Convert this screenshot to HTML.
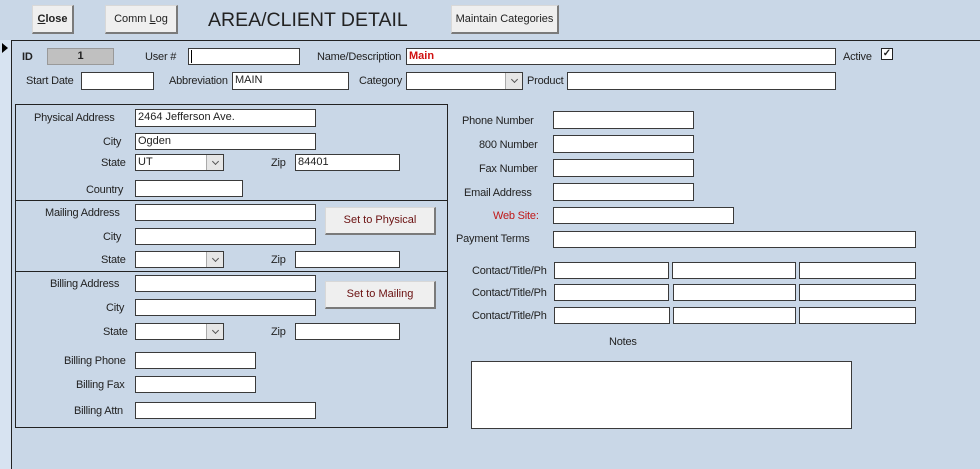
<!DOCTYPE html>
<html><head><meta charset="utf-8"><style>
*{margin:0;padding:0;box-sizing:border-box}
body{width:980px;height:469px;background:#c9d7e7;position:relative;overflow:hidden;font-family:"Liberation Sans",sans-serif;font-size:11px;color:#222}
div{position:absolute}
.l{white-space:nowrap;line-height:14px;letter-spacing:-0.2px;margin-top:1px}
.i{background:#fff;border:1px solid #3a3a3a;font-size:11px;line-height:15px;padding-left:2px;white-space:nowrap}
.b{background:#efefef;border:1px solid #d8d8d8;border-right:2px solid #7a7a7a;border-bottom:2px solid #7a7a7a;text-align:center;font-size:11px}
.s:after{content:"";position:absolute;right:0;top:0;width:16px;height:100%;background:#e6e6e6;border-left:1px solid #aaa}
.s:before{content:"";position:absolute;right:5px;top:4px;width:4px;height:4px;border-right:1px solid #555;border-bottom:1px solid #555;transform:rotate(45deg);z-index:2}
.h{background:#222}
</style></head><body>
<div style="left:0;top:40px;width:11px;height:429px;background:#d7e3f1"></div>
<div class="h" style="left:11px;top:40px;width:969px;height:1px"></div>
<div class="h" style="left:11px;top:40px;width:1px;height:429px"></div>
<div style="left:2px;top:43px;width:0;height:0;border-left:6px solid #000;border-top:5px solid transparent;border-bottom:5px solid transparent"></div>

<div class="b" style="left:32px;top:5px;width:42px;height:29px;line-height:26px;font-weight:bold"><u>C</u>lose</div>
<div class="b" style="left:105px;top:5px;width:73px;height:29px;line-height:26px">Comm <u>L</u>og</div>
<div class="l" style="left:208px;top:8px;font-size:19.5px;line-height:22px;letter-spacing:0">AREA/CLIENT DETAIL</div>
<div class="b" style="left:451px;top:5px;width:108px;height:29px;line-height:26px">Maintain Categories</div>

<div class="l" style="left:22px;top:49px;font-weight:bold">ID</div>
<div style="left:47px;top:48px;width:67px;height:17px;background:#c0c0c0;border:1px solid #999;text-align:center;font-weight:bold;line-height:15px">1</div>
<div class="l" style="left:145px;top:49px">User #</div>
<div class="i" style="left:188px;top:48px;width:112px;height:17px"><span style="display:inline-block;width:1px;height:13px;background:#000;margin-top:1px"></span></div>
<div class="l" style="left:317px;top:49px">Name/Description</div>
<div class="i" style="left:406px;top:48px;width:430px;height:17px;color:#d01010;font-weight:bold">Main</div>
<div class="l" style="left:843px;top:49px">Active</div>
<div style="left:881px;top:48px;width:12px;height:12px;background:#fff;border:1px solid #222;font-size:10px;line-height:10px;text-align:center;font-weight:bold">✓</div>

<div class="l" style="left:26px;top:73px">Start Date</div>
<div class="i" style="left:81px;top:72px;width:73px;height:18px"></div>
<div class="l" style="left:169px;top:73px">Abbreviation</div>
<div class="i" style="left:232px;top:72px;width:117px;height:18px">MAIN</div>
<div class="l" style="left:359px;top:73px">Category</div>
<div class="i s" style="left:406px;top:72px;width:117px;height:18px"></div>
<div class="l" style="left:527px;top:73px">Product</div>
<div class="i" style="left:567px;top:72px;width:269px;height:18px"></div>

<div style="left:15px;top:104px;width:433px;height:324px;border:1px solid #222"></div>
<div class="h" style="left:15px;top:200px;width:433px;height:1px"></div>
<div class="h" style="left:15px;top:271px;width:433px;height:1px"></div>

<div class="l" style="left:34px;top:110px">Physical Address</div>
<div class="i" style="left:135px;top:109px;width:181px;height:18px">2464 Jefferson Ave.</div>
<div class="l" style="left:103px;top:134px">City</div>
<div class="i" style="left:135px;top:133px;width:181px;height:17px">Ogden</div>
<div class="l" style="left:101px;top:155px">State</div>
<div class="i s" style="left:135px;top:154px;width:89px;height:17px">UT</div>
<div class="l" style="left:271px;top:155px">Zip</div>
<div class="i" style="left:295px;top:154px;width:105px;height:17px">84401</div>
<div class="l" style="left:86px;top:182px">Country</div>
<div class="i" style="left:135px;top:180px;width:108px;height:17px"></div>

<div class="l" style="left:45px;top:205px">Mailing Address</div>
<div class="i" style="left:135px;top:204px;width:181px;height:17px"></div>
<div class="b" style="left:325px;top:207px;width:111px;height:28px;line-height:25px;color:#6a1010">Set to Physical</div>
<div class="l" style="left:103px;top:229px">City</div>
<div class="i" style="left:135px;top:228px;width:181px;height:17px"></div>
<div class="l" style="left:101px;top:252px">State</div>
<div class="i s" style="left:135px;top:251px;width:89px;height:17px"></div>
<div class="l" style="left:271px;top:252px">Zip</div>
<div class="i" style="left:295px;top:251px;width:105px;height:17px"></div>

<div class="l" style="left:50px;top:276px">Billing Address</div>
<div class="i" style="left:135px;top:275px;width:181px;height:17px"></div>
<div class="b" style="left:325px;top:281px;width:111px;height:28px;line-height:25px;color:#6a1010">Set to Mailing</div>
<div class="l" style="left:106px;top:300px">City</div>
<div class="i" style="left:135px;top:299px;width:181px;height:17px"></div>
<div class="l" style="left:103px;top:324px">State</div>
<div class="i s" style="left:135px;top:323px;width:89px;height:17px"></div>
<div class="l" style="left:271px;top:324px">Zip</div>
<div class="i" style="left:295px;top:323px;width:105px;height:17px"></div>
<div class="l" style="left:64px;top:353px">Billing Phone</div>
<div class="i" style="left:135px;top:352px;width:121px;height:17px"></div>
<div class="l" style="left:76px;top:377px">Billing Fax</div>
<div class="i" style="left:135px;top:376px;width:121px;height:17px"></div>
<div class="l" style="left:74px;top:403px">Billing Attn</div>
<div class="i" style="left:135px;top:402px;width:181px;height:17px"></div>

<div class="l" style="left:462px;top:113px">Phone Number</div>
<div class="i" style="left:553px;top:111px;width:141px;height:18px"></div>
<div class="l" style="left:479px;top:137px">800 Number</div>
<div class="i" style="left:553px;top:135px;width:141px;height:18px"></div>
<div class="l" style="left:479px;top:161px">Fax Number</div>
<div class="i" style="left:553px;top:159px;width:141px;height:18px"></div>
<div class="l" style="left:464px;top:185px">Email Address</div>
<div class="i" style="left:553px;top:183px;width:141px;height:18px"></div>
<div class="l" style="left:493px;top:208px;color:#c01818">Web Site:</div>
<div class="i" style="left:553px;top:207px;width:181px;height:17px"></div>
<div class="l" style="left:456px;top:231px">Payment Terms</div>
<div class="i" style="left:553px;top:231px;width:363px;height:17px"></div>

<div class="l" style="left:472px;top:263px">Contact/Title/Ph</div>
<div class="i" style="left:554px;top:262px;width:115px;height:17px"></div>
<div class="i" style="left:672px;top:262px;width:124px;height:17px"></div>
<div class="i" style="left:799px;top:262px;width:117px;height:17px"></div>
<div class="l" style="left:472px;top:285px">Contact/Title/Ph</div>
<div class="i" style="left:554px;top:284px;width:115px;height:17px"></div>
<div class="i" style="left:673px;top:284px;width:123px;height:17px"></div>
<div class="i" style="left:799px;top:284px;width:117px;height:17px"></div>
<div class="l" style="left:472px;top:308px">Contact/Title/Ph</div>
<div class="i" style="left:554px;top:307px;width:116px;height:17px"></div>
<div class="i" style="left:673px;top:307px;width:123px;height:17px"></div>
<div class="i" style="left:799px;top:307px;width:117px;height:17px"></div>

<div class="l" style="left:609px;top:334px">Notes</div>
<div class="i" style="left:471px;top:361px;width:381px;height:68px"></div>
</body></html>
